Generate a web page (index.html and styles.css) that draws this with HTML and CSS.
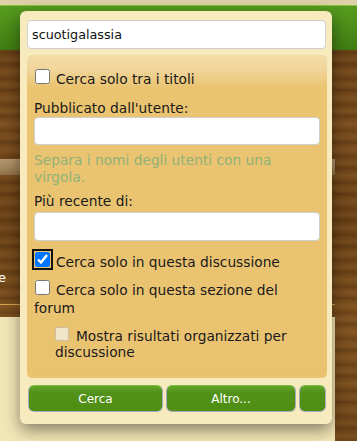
FILE: index.html
```html
<!DOCTYPE html>
<html lang="it">
<head>
<meta charset="utf-8">
<title>Cerca</title>
<link rel="stylesheet" href="styles.css">
</head>
<body>
<div class="page">
  <div class="topstrip"></div>
  <div class="greenbar"></div>
  <div class="below">
    <div class="main">
      <div class="header">
        <div class="navband"></div>
        <div class="menu-text">e</div>
        <div class="header-rule"></div>
      </div>
      <div class="content"></div>
    </div>
    <div class="sidebar"></div>
  </div>
</div>
<form class="popup">
  <input class="search-input" type="text" value="scuotigalassia">
  <div class="options">
    <label class="check-row row-first"><input class="cb" type="checkbox">Cerca solo tra i titoli</label>
    <div class="field-label label-user">Pubblicato dall'utente:</div>
    <input class="field" type="text">
    <div class="hint">Separa i nomi degli utenti con una virgola.</div>
    <div class="field-label label-date">Più recente di:</div>
    <input class="field field-date" type="text">
    <label class="check-row row-thread"><input class="cb cb-focus" type="checkbox" checked>Cerca solo in questa discussione</label>
    <label class="check-row row-forum"><input class="cb" type="checkbox">Cerca solo in questa sezione del forum</label>
    <label class="check-row row-sub"><input class="cb cb-sub" type="checkbox" disabled>Mostra risultati organizzati per discussione</label>
  </div>
  <div class="buttons">
    <button class="btn btn-search" type="button">Cerca</button>
    <button class="btn btn-more" type="button">Altro...</button>
    <button class="btn btn-small" type="button"></button>
  </div>
</form>
</body>
</html>
```
FILE: styles.css
```css
html, body {
  margin: 0;
  padding: 0;
}
body {
  width: 357px;
  height: 441px;
  overflow: hidden;
  position: relative;
  font-family: "DejaVu Sans", Verdana, sans-serif;
}
.page {
  width: 357px;
  height: 441px;
  display: flex;
  flex-direction: column;
}
.topstrip {
  height: 5px;
  background: #ddd0a6;
}
.greenbar {
  height: 45px;
  box-sizing: border-box;
  border-top: 1px solid #86c540;
  background: linear-gradient(#569b1e, #4a8a18 60%, #3f7b12);
}
.below {
  flex: 1;
  display: flex;
  background:
    repeating-linear-gradient(180deg,
      rgba(0,0,0,0) 0px, rgba(0,0,0,0.10) 3px, rgba(0,0,0,0) 5px,
      rgba(255,210,150,0.06) 9px, rgba(0,0,0,0) 12px, rgba(0,0,0,0.14) 14px,
      rgba(0,0,0,0) 17px, rgba(255,200,140,0.08) 22px, rgba(0,0,0,0) 26px),
    linear-gradient(180deg, #6a4217 0%, #76491b 20%, #6a4116 45%, #7b4e1d 70%, #6d4418 100%);
}
.main {
  width: 335px;
  display: flex;
  flex-direction: column;
}
.header {
  height: 267px;
  box-sizing: border-box;
  padding-top: 109px;
}
.navband {
  height: 16px;
  background: linear-gradient(#b39870, #a2845a 60%, #8e6f45);
}
.menu-text {
  margin-top: 95px;
  margin-left: -2px;
  font-size: 13px;
  line-height: 16px;
  color: #ffffff;
}
.header-rule {
  margin-top: 18px;
  height: 1px;
  background: #d5a453;
}
.content {
  flex: 1;
  background: #f3e6b6;
}
.sidebar {
  flex: 1;
}

.popup {
  position: absolute;
  left: 20px;
  top: 11px;
  width: 312px;
  height: 413px;
  box-sizing: border-box;
  margin: 0;
  padding: 9px 5px 0 7px;
  background: #f7eabd;
  border-radius: 6px;
  box-shadow: 0 6px 16px rgba(0, 0, 0, 0.45);
}
.search-input {
  display: block;
  width: 299px;
  height: 29px;
  box-sizing: border-box;
  margin: 0;
  padding: 0 4px;
  border: 1px solid #cfcfcf;
  border-radius: 4px;
  background: #ffffff;
  font-family: "DejaVu Sans", Verdana, sans-serif;
  font-size: 12.75px;
  color: #111111;
}
.options {
  margin-top: 6px;
  width: 300px;
  height: 323px;
  box-sizing: border-box;
  padding: 15px 7px 0 7px;
  border-radius: 5px;
  background: linear-gradient(180deg, #f3dca6 0px, #f1d69c 14px, #eac471 32px, #eac371 100%);
  font-size: 13.75px;
  line-height: 18px;
  color: #1a1a1a;
}
.check-row {
  display: block;
}
.cb {
  width: 15px;
  height: 15px;
  margin: -4px 6px 1px 1px;
  vertical-align: baseline;
}
.cb-focus {
  outline: 2px solid #111111;
  outline-offset: 1px;
}
.field-label {
  display: block;
}
.label-user {
  margin-top: 11px;
}
.field {
  display: block;
  width: 286px;
  height: 28px;
  box-sizing: border-box;
  margin: 0;
  border: 1px solid #cfcfcf;
  border-radius: 4px;
  background: #ffffff;
}
.hint {
  margin-top: 7px;
  line-height: 17px;
  color: #8fb277;
}
.label-date {
  margin-top: 6px;
}
.field-date {
  margin-top: 2px;
  height: 29px;
}
.row-thread {
  margin-top: 12px;
}
.row-forum {
  margin-top: 10px;
}
.row-sub {
  margin-top: 11px;
  padding-left: 21px;
  line-height: 16px;
}
.cb-sub {
  width: 14px;
  height: 14px;
  margin: -4px 7px 2px 0;
}
.buttons {
  margin-top: 7px;
  padding-left: 1px;
  display: flex;
  gap: 3px;
}
.btn {
  height: 27px;
  box-sizing: border-box;
  margin: 0;
  padding: 0;
  border: 1px solid #a4aabd;
  border-top-color: #79bd45;
  border-radius: 6px;
  background: linear-gradient(180deg, #62a828 0%, #52921a 25%, #4f8e12 100%);
  font-family: "DejaVu Sans", Verdana, sans-serif;
  font-size: 12px;
  color: #ffffff;
}
.btn-search {
  width: 135px;
}
.btn-more {
  width: 130px;
}
.btn-small {
  width: 27px;
}
```
